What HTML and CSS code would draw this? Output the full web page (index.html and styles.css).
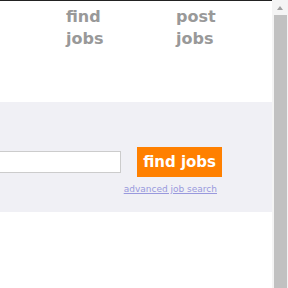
FILE: index.html
```html
<!DOCTYPE html>
<html>
<head>
<meta charset="utf-8">
<link rel="stylesheet" href="styles.css">
</head>
<body>
<div class="frame">
  <div class="page">
    <div class="topline"></div>
    <nav class="nav">
      <a class="nav-link" href="#">find<br>jobs</a>
      <a class="nav-link" href="#">post<br>jobs</a>
    </nav>
    <section class="band">
      <form class="search">
        <div class="row">
          <input class="query" type="text">
          <button class="go" type="button">find jobs</button>
        </div>
        <a class="adv" href="#">advanced job search</a>
      </form>
    </section>
  </div>
  <div class="scrollbar">
    <div class="arrow"></div>
    <div class="thumb"></div>
  </div>
</div>
</body>
</html>
```

FILE: styles.css
```css
html, body {
  margin: 0;
  padding: 0;
  height: 100%;
  overflow: hidden;
  background: #fff;
}
.frame {
  display: flex;
  height: 288px;
  width: 288px;
}
.page {
  flex: 1;
  min-width: 0;
  overflow: hidden;
  font-family: "DejaVu Sans", Verdana, sans-serif;
}
.topline {
  height: 1px;
  background: #222;
}
.nav {
  display: flex;
  padding: 5px 0 0 66px;
  height: 96px;
}
.nav-link {
  display: block;
  flex: 0 0 110px;
  color: #999;
  font-weight: bold;
  font-size: 16px;
  line-height: 22px;
  text-decoration: none;
}
.band {
  background: #f0f0f5;
  height: 110px;
  display: flex;
  justify-content: flex-end;
  padding-right: 50px;
}
.search {
  display: flex;
  flex-direction: column;
  align-items: flex-end;
  padding-top: 45px;
}
.row {
  display: flex;
  align-items: center;
  gap: 16px;
}
.query {
  width: 140px;
  height: 18px;
  border: 1px solid #ccc;
  background: #fff;
  padding: 1px;
  margin: 0;
}
.go {
  background: #ff8000;
  color: #fff;
  border: 0;
  font-family: "DejaVu Sans", Verdana, sans-serif;
  font-weight: bold;
  font-size: 15px;
  height: 30px;
  padding: 0 6px;
  white-space: nowrap;
}
.adv {
  margin-top: 7px;
  margin-right: 5px;
  font-size: 9px;
  color: #9999dd;
}
.scrollbar {
  width: 16px;
  background: #f4f4f4;
  display: flex;
  flex-direction: column;
  align-items: center;
}
.arrow {
  width: 0;
  height: 0;
  margin: 6px 0 5px;
  border-left: 3px solid transparent;
  border-right: 3px solid transparent;
  border-bottom: 4px solid #a0a0a0;
}
.thumb {
  flex: 1;
  width: 13px;
  background: #c1c1c1;
}
```
